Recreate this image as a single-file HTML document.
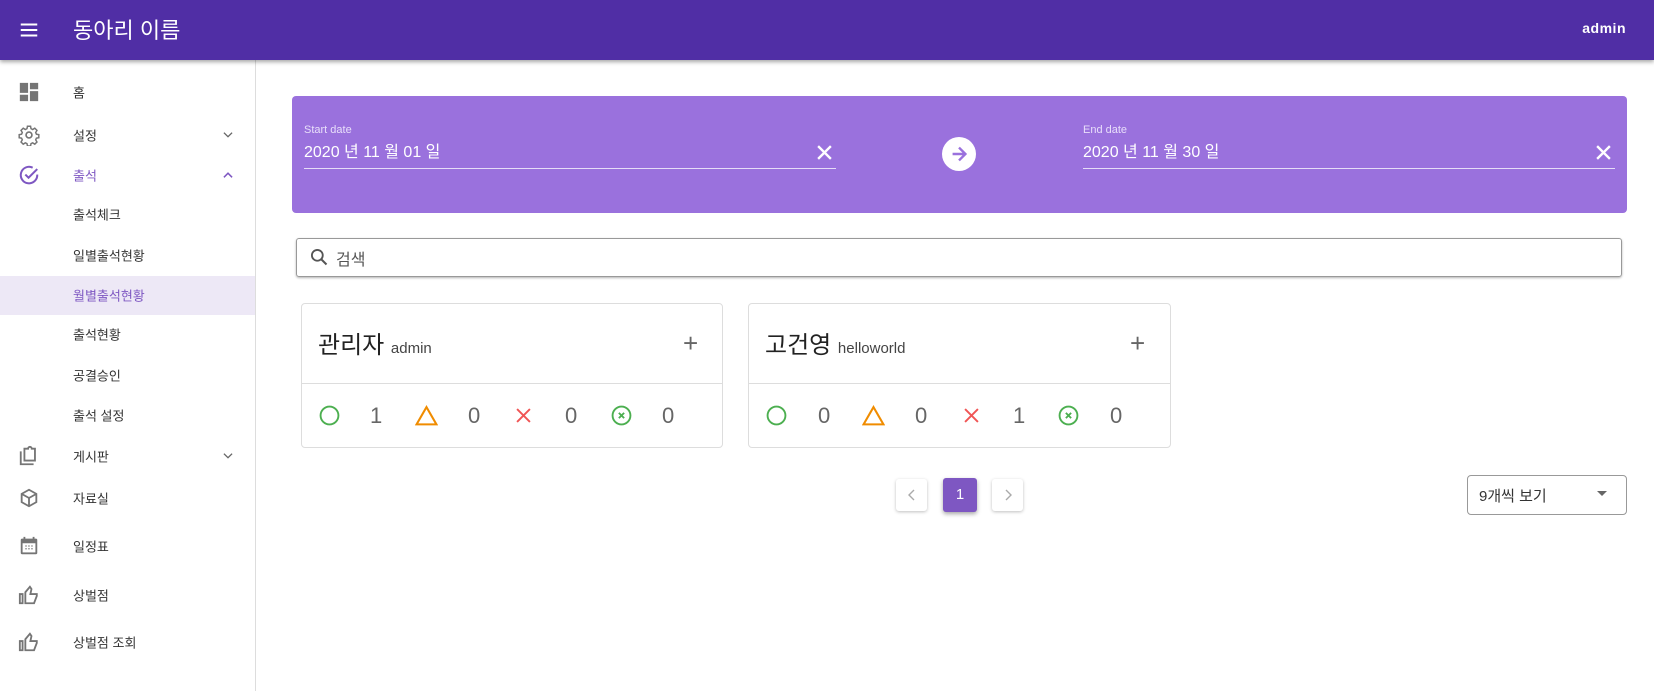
<!DOCTYPE html>
<html><head><meta charset="utf-8"><style>
*{box-sizing:border-box;margin:0;padding:0}
body{width:1654px;height:691px;overflow:hidden;background:#fff;font-family:"Liberation Sans","Noto Sans CJK KR",sans-serif;position:relative;color:#222}
.abs{position:absolute}
.bar{left:0;top:0;width:1654px;height:60px;background:#502ea5;box-shadow:0 2px 4px rgba(0,0,0,.35);z-index:2}
.side{left:0;top:60px;width:256px;height:631px;border-right:1px solid #ddd}
.mi{position:absolute;left:73px;font-size:13px;color:#333;transform:translateY(-50%)}
.ic{position:absolute;left:18px;width:22px;height:22px;transform:translateY(-50%)}
.chev{position:absolute;left:221px;width:14px;height:14px;transform:translateY(-50%)}
.card{border:1px solid #ddd;border-radius:4px;background:#fff}
.num{position:absolute;top:403px;font-size:22px;color:#666}
</style></head><body>
<div class="abs bar">
 <svg class="abs" style="left:18px;top:19px" width="22" height="22" viewBox="0 0 24 24"><path d="M3 6h18M3 12h18M3 18h18" stroke="#fff" stroke-width="2.2"/></svg>
 <div class="abs" style="left:73px;top:13px;font-size:22px;color:#fff">동아리 이름</div>
 <div class="abs" style="right:28px;top:20px;font-size:14px;font-weight:bold;color:#fff;letter-spacing:.5px">admin</div>
</div>
<div class="abs side"></div>
<div class="abs" style="left:0;top:276px;width:255px;height:39px;background:#ede8f6"></div>
<svg class="ic" style="top:92px" viewBox="0 0 24 24"><path fill="#757575" d="M2 13h9V2H2zm0 9h9v-7H2zm11 0h9V11h-9zm0-20v7h9V2z"/></svg>
<svg class="ic" style="top:135px" viewBox="0 0 24 24"><circle cx="12" cy="12" r="3.2" fill="none" stroke="#757575" stroke-width="1.8"/><path fill="none" stroke="#757575" stroke-width="1.6" d="M10.3 2.5h3.4l.5 2.6 1.8.9 2.3-1.4 2.4 2.4-1.4 2.3.8 1.8 2.6.5v3.4l-2.6.5-.8 1.8 1.4 2.3-2.4 2.4-2.3-1.4-1.8.8-.5 2.6h-3.4l-.5-2.6-1.8-.8-2.3 1.4-2.4-2.4 1.4-2.3-.8-1.8-2.6-.5v-3.4l2.6-.5.8-1.8-1.4-2.3 2.4-2.4 2.3 1.4 1.8-.9z"/></svg>
<svg class="ic" style="top:175px" viewBox="0 0 24 24"><path fill="none" stroke="#7e57c2" stroke-width="2.2" d="M21 11.5A9 9 0 1 1 16 4M8 11.5l3.5 3.5L21 5.5"/></svg>
<svg class="ic" style="top:456px" viewBox="0 0 24 24"><path fill="none" stroke="#757575" stroke-width="2" d="M3 7v14h14M8 4h3a2 2 0 0 1 4 0h3.5v13H7V4z"/></svg>
<svg class="ic" style="top:498px" viewBox="0 0 24 24"><path fill="none" stroke="#757575" stroke-width="2" d="M12 3l8 4.5v9L12 21l-8-4.5v-9zM4 7.5l8 4.5 8-4.5M12 12v9"/></svg>
<svg class="ic" style="top:546px" viewBox="0 0 24 24"><rect x="3" y="4" width="18" height="17" rx="1.5" fill="#757575"/><rect x="5" y="9" width="14" height="10" fill="#fff"/><path d="M7 2v4M17 2v4" stroke="#757575" stroke-width="2"/><path d="M8 12h1.5M11.2 12h1.5M14.5 12h1.5M8 15h1.5M11.2 15h1.5M14.5 15h1.5" stroke="#757575" stroke-width="1.4"/></svg>
<svg class="ic" style="top:595px" viewBox="0 0 24 24"><path fill="none" stroke="#757575" stroke-width="2" d="M2 11h3v10H2zM8 21h9.5l3-8v-2h-7l1.2-5.5L13 3 8 9z"/></svg>
<svg class="ic" style="top:642px" viewBox="0 0 24 24"><path fill="none" stroke="#757575" stroke-width="2" d="M2 11h3v10H2zM8 21h9.5l3-8v-2h-7l1.2-5.5L13 3 8 9z"/></svg>
<svg class="chev" style="top:135px" viewBox="0 0 24 24"><path d="M5 8l7 7 7-7" fill="none" stroke="#666" stroke-width="2.2"/></svg>
<svg class="chev" style="top:175px" viewBox="0 0 24 24"><path d="M5 16l7-7 7 7" fill="none" stroke="#7e57c2" stroke-width="2.6"/></svg>
<svg class="chev" style="top:456px" viewBox="0 0 24 24"><path d="M5 8l7 7 7-7" fill="none" stroke="#666" stroke-width="2.2"/></svg>
<div class="mi" style="top:92px">홈</div>
<div class="mi" style="top:135px">설정</div>
<div class="mi" style="top:175px;color:#7e57c2">출석</div>
<div class="mi" style="top:214px">출석체크</div>
<div class="mi" style="top:255px">일별출석현황</div>
<div class="mi" style="top:295px;color:#7e57c2">월별출석현황</div>
<div class="mi" style="top:334px">출석현황</div>
<div class="mi" style="top:375px">공결승인</div>
<div class="mi" style="top:415px">출석 설정</div>
<div class="mi" style="top:456px">게시판</div>
<div class="mi" style="top:498px">자료실</div>
<div class="mi" style="top:546px">일정표</div>
<div class="mi" style="top:595px">상벌점</div>
<div class="mi" style="top:642px">상벌점 조회</div>

<div class="abs" style="left:292px;top:96px;width:1335px;height:117px;background:#9a71dd;border-radius:4px"></div>
<div class="abs" style="left:304px;top:124px;font-size:11px;color:#e8defa">Start date</div>
<div class="abs" style="left:304px;top:138px;font-size:16px;color:#fff">2020 년 11 월 01 일</div>
<div class="abs" style="left:304px;top:168px;width:532px;height:1px;background:#e6dcf7"></div>
<svg class="abs" style="left:816px;top:144px" width="17" height="17" viewBox="0 0 16 16"><path d="M2 2l12 12M14 2L2 14" stroke="#fff" stroke-width="2.2"/></svg>
<div class="abs" style="left:942px;top:137px;width:34px;height:34px;border-radius:50%;background:#fff"></div>
<svg class="abs" style="left:948px;top:143px" width="22" height="22" viewBox="0 0 24 24"><path d="M5 12h13M12 5l7 7-7 7" fill="none" stroke="#9a71dd" stroke-width="2.6"/></svg>
<div class="abs" style="left:1083px;top:124px;font-size:11px;color:#e8defa">End date</div>
<div class="abs" style="left:1083px;top:138px;font-size:16px;color:#fff">2020 년 11 월 30 일</div>
<div class="abs" style="left:1083px;top:168px;width:532px;height:1px;background:#e6dcf7"></div>
<svg class="abs" style="left:1595px;top:144px" width="17" height="17" viewBox="0 0 16 16"><path d="M2 2l12 12M14 2L2 14" stroke="#fff" stroke-width="2.2"/></svg>

<div class="abs" style="left:296px;top:238px;width:1326px;height:39px;border:1px solid #999;border-radius:3px;box-shadow:0 1px 2px rgba(0,0,0,.3)"></div>
<svg class="abs" style="left:309px;top:247px" width="20" height="20" viewBox="0 0 24 24"><circle cx="10" cy="10" r="6.5" fill="none" stroke="#555" stroke-width="2.2"/><path d="M15 15l6 6" stroke="#555" stroke-width="2.4"/></svg>
<div class="abs" style="left:336px;top:246px;font-size:16px;color:#555">검색</div>

<div class="abs card" style="left:301px;top:303px;width:422px;height:145px"></div>
<div class="abs" style="left:301px;top:383px;width:422px;height:1px;background:#ddd"></div>
<div class="abs" style="left:318px;top:325px;font-size:24px;color:#222">관리자 <span style="font-size:15px;color:#444">admin</span></div>
<div class="abs" style="left:683px;top:328px;font-size:26px;color:#666;font-weight:300">+</div>
<div class="abs card" style="left:748px;top:303px;width:423px;height:145px"></div>
<div class="abs" style="left:748px;top:383px;width:423px;height:1px;background:#ddd"></div>
<div class="abs" style="left:765px;top:325px;font-size:24px;color:#222">고건영 <span style="font-size:15px;color:#444">helloworld</span></div>
<div class="abs" style="left:1130px;top:328px;font-size:26px;color:#666;font-weight:300">+</div>

<svg class="abs" style="left:319px;top:405px" width="21" height="21" viewBox="0 0 20 20"><circle cx="10" cy="10" r="8.5" fill="none" stroke="#4caf50" stroke-width="1.8"/></svg>
<div class="num" style="left:370px">1</div>
<svg class="abs" style="left:415px;top:405px" width="23" height="21" viewBox="0 0 22 20"><path d="M11 2L20.5 18.5H1.5z" fill="none" stroke="#f08c00" stroke-width="2"/></svg>
<div class="num" style="left:468px">0</div>
<svg class="abs" style="left:516px;top:408px" width="15" height="15" viewBox="0 0 14 14"><path d="M1 1l12 12M13 1L1 13" stroke="#f05555" stroke-width="1.8"/></svg>
<div class="num" style="left:565px">0</div>
<svg class="abs" style="left:611px;top:405px" width="21" height="21" viewBox="0 0 20 20"><circle cx="10" cy="10" r="8.5" fill="none" stroke="#4caf50" stroke-width="1.8"/><path d="M7.5 7.5l5 5M12.5 7.5l-5 5" stroke="#4caf50" stroke-width="1.8"/></svg>
<div class="num" style="left:662px">0</div>
<svg class="abs" style="left:766px;top:405px" width="21" height="21" viewBox="0 0 20 20"><circle cx="10" cy="10" r="8.5" fill="none" stroke="#4caf50" stroke-width="1.8"/></svg>
<div class="num" style="left:818px">0</div>
<svg class="abs" style="left:862px;top:405px" width="23" height="21" viewBox="0 0 22 20"><path d="M11 2L20.5 18.5H1.5z" fill="none" stroke="#f08c00" stroke-width="2"/></svg>
<div class="num" style="left:915px">0</div>
<svg class="abs" style="left:964px;top:408px" width="15" height="15" viewBox="0 0 14 14"><path d="M1 1l12 12M13 1L1 13" stroke="#f05555" stroke-width="1.8"/></svg>
<div class="num" style="left:1013px">1</div>
<svg class="abs" style="left:1058px;top:405px" width="21" height="21" viewBox="0 0 20 20"><circle cx="10" cy="10" r="8.5" fill="none" stroke="#4caf50" stroke-width="1.8"/><path d="M7.5 7.5l5 5M12.5 7.5l-5 5" stroke="#4caf50" stroke-width="1.8"/></svg>
<div class="num" style="left:1110px">0</div>

<div class="abs" style="left:896px;top:479px;width:31px;height:32px;border-radius:3px;box-shadow:0 1px 3px rgba(0,0,0,.25);background:#fff"></div>
<svg class="abs" style="left:905px;top:488px" width="14" height="14" viewBox="0 0 14 14"><path d="M9 2L4 7l5 5" fill="none" stroke="#aaa" stroke-width="1.4"/></svg>
<div class="abs" style="left:943px;top:478px;width:34px;height:34px;border-radius:3px;background:#7e57c2;box-shadow:0 2px 4px rgba(0,0,0,.35);color:#fff;font-size:15px;text-align:center;line-height:34px">1</div>
<div class="abs" style="left:992px;top:479px;width:31px;height:32px;border-radius:3px;box-shadow:0 1px 3px rgba(0,0,0,.25);background:#fff"></div>
<svg class="abs" style="left:1001px;top:488px" width="14" height="14" viewBox="0 0 14 14"><path d="M5 2l5 5-5 5" fill="none" stroke="#aaa" stroke-width="1.4"/></svg>
<div class="abs" style="left:1467px;top:475px;width:160px;height:40px;border:1px solid #999;border-radius:4px"></div>
<div class="abs" style="left:1479px;top:485px;font-size:15px;color:#333">9개씩 보기</div>
<svg class="abs" style="left:1597px;top:490px" width="10" height="8" viewBox="0 0 10 6"><path d="M0 0h10L5 5z" fill="#666"/></svg>
</body></html>
